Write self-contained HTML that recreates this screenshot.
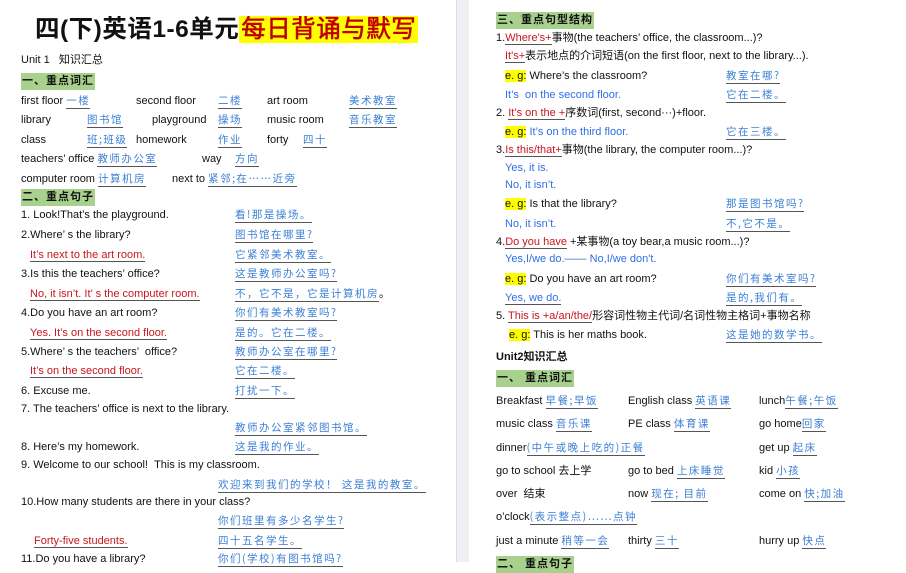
<!DOCTYPE html>
<html><head><meta charset="utf-8"><style>
body{margin:0;width:906px;height:562px;overflow:hidden;background:#fff;position:relative;font-family:"Liberation Sans","Noto Sans CJK SC",sans-serif;color:#111}
.l{position:absolute;font-size:11px;line-height:14px;white-space:nowrap}
.a{color:#3b7fd4;font-family:"Noto Sans CJK SC",sans-serif;letter-spacing:1.5px;border-bottom:1.5px solid #555;font-size:10.5px}
.r{color:#c8161d}
.b{color:#2f6fe6}
.u{border-bottom:1.5px solid #555}
.g{position:absolute;background:#a9d18e;font-weight:bold;font-size:11px;line-height:17px;padding:0 1px;letter-spacing:1px}
.y{background:#ffff00}
.bd{font-weight:bold}
</style></head><body>
<div style="position:absolute;left:457px;top:0;width:12px;height:562px;background:#eef0f4"></div>
<div style="position:absolute;left:456px;top:0;width:1px;height:562px;background:#ddd"></div>

<!-- Left page -->
<div style="position:absolute;left:35px;top:12px;font-size:24.5px;line-height:35px;font-weight:bold;white-space:nowrap;letter-spacing:0.5px">四(下)英语1-6单元<span style="background:#ffff00;color:#c00000;padding:0 2px;font-weight:normal;-webkit-text-stroke:0.6px #c00000">每日背诵与默写</span></div>
<div class="l" style="left:21px;top:53px">Unit 1 &nbsp;&nbsp;知识汇总</div>
<div class="g" style="left:21px;top:73px">一、重点词汇</div>

<div class="l" style="left:21px;top:94px">first floor <span class="a">一楼</span></div>
<div class="l" style="left:136px;top:94px">second floor</div>
<div class="l" style="left:218px;top:94px"><span class="a">二楼</span></div>
<div class="l" style="left:267px;top:94px">art room</div>
<div class="l" style="left:349px;top:94px"><span class="a">美术教室</span></div>

<div class="l" style="left:21px;top:113px">library</div>
<div class="l" style="left:87px;top:113px"><span class="a">图书馆</span></div>
<div class="l" style="left:152px;top:113px">playground</div>
<div class="l" style="left:218px;top:113px"><span class="a">操场</span></div>
<div class="l" style="left:267px;top:113px">music room</div>
<div class="l" style="left:349px;top:113px"><span class="a">音乐教室</span></div>

<div class="l" style="left:21px;top:133px">class</div>
<div class="l" style="left:87px;top:133px"><span class="a">班;班级</span></div>
<div class="l" style="left:136px;top:133px">homework</div>
<div class="l" style="left:218px;top:133px"><span class="a">作业</span></div>
<div class="l" style="left:267px;top:133px">forty</div>
<div class="l" style="left:303px;top:133px"><span class="a">四十</span></div>

<div class="l" style="left:21px;top:152px">teachers’ office <span class="a">教师办公室</span></div>
<div class="l" style="left:202px;top:152px">way</div>
<div class="l" style="left:235px;top:152px"><span class="a">方向</span></div>

<div class="l" style="left:21px;top:172px">computer room <span class="a">计算机房</span></div>
<div class="l" style="left:172px;top:172px">next to <span class="a">紧邻;在……近旁</span></div>

<div class="g" style="left:21px;top:189px">二、重点句子</div>

<div class="l" style="left:21px;top:208px">1. Look!That’s the playground.</div>
<div class="l" style="left:235px;top:208px"><span class="a">看!那是操场。</span></div>
<div class="l" style="left:21px;top:228px">2.Where’ s the library?</div>
<div class="l" style="left:235px;top:228px"><span class="a">图书馆在哪里?</span></div>
<div class="l r" style="left:30px;top:248px"><span class="u">It’s next to the art room.</span></div>
<div class="l" style="left:235px;top:248px"><span class="a">它紧邻美术教室。</span></div>
<div class="l" style="left:21px;top:267px">3.Is this the teachers’ office?</div>
<div class="l" style="left:235px;top:267px"><span class="a">这是教师办公室吗?</span></div>
<div class="l r" style="left:30px;top:287px"><span class="u">No, it isn’t. It’ s the computer room.</span></div>
<div class="l" style="left:235px;top:287px"><span class="a">不，它不是，它是计算机房</span>。</div>
<div class="l" style="left:21px;top:306px">4.Do you have an art room?</div>
<div class="l" style="left:235px;top:306px"><span class="a">你们有美术教室吗?</span></div>
<div class="l r" style="left:30px;top:326px"><span class="u">Yes. It’s on the second floor.</span></div>
<div class="l" style="left:235px;top:326px"><span class="a">是的。它在二楼。</span></div>
<div class="l" style="left:21px;top:345px">5.Where’ s the teachers’ &nbsp;office?</div>
<div class="l" style="left:235px;top:345px"><span class="a">教师办公室在哪里?</span></div>
<div class="l r" style="left:30px;top:364px"><span class="u">It’s on the second floor.</span></div>
<div class="l" style="left:235px;top:364px"><span class="a">它在二楼。</span></div>
<div class="l" style="left:21px;top:384px">6. Excuse me.</div>
<div class="l" style="left:235px;top:384px"><span class="a">打扰一下。</span></div>
<div class="l" style="left:21px;top:402px">7. The teachers’ office is next to the library.</div>
<div class="l" style="left:235px;top:421px"><span class="a">教师办公室紧邻图书馆。</span></div>
<div class="l" style="left:21px;top:440px">8. Here’s my homework.</div>
<div class="l" style="left:235px;top:440px"><span class="a">这是我的作业。</span></div>
<div class="l" style="left:21px;top:458px">9. Welcome to our school! &nbsp;This is my classroom.</div>
<div class="l" style="left:218px;top:478px"><span class="a">欢迎来到我们的学校！ 这是我的教室。</span></div>
<div class="l" style="left:21px;top:495px">10.How many students are there in your class?</div>
<div class="l" style="left:218px;top:514px"><span class="a">你们班里有多少名学生?</span></div>
<div class="l r" style="left:34px;top:534px"><span class="u">Forty-five students.</span></div>
<div class="l" style="left:218px;top:534px"><span class="a">四十五名学生。</span></div>
<div class="l" style="left:21px;top:552px">11.Do you have a library?</div>
<div class="l" style="left:218px;top:552px"><span class="a">你们(学校)有图书馆吗?</span></div>

<!-- Right page -->
<div class="g" style="left:496px;top:12px">三、重点句型结构</div>
<div class="l" style="left:496px;top:31px">1.<span class="r u">Where's+</span>事物(the teachers’ office, the classroom...)?</div>
<div class="l" style="left:505px;top:49px"><span class="r u">It's+</span>表示地点的介词短语(on the first floor, next to the library...).</div>
<div class="l" style="left:505px;top:69px"><span class="y">e. g:</span> Where’s the classroom?</div>
<div class="l" style="left:726px;top:69px"><span class="a">教室在哪?</span></div>
<div class="l b" style="left:505px;top:88px">It’s &nbsp;on the second floor.</div>
<div class="l" style="left:726px;top:88px"><span class="a">它在二楼。</span></div>
<div class="l" style="left:496px;top:106px">2. <span class="r u">It’s on the +</span>序数词(first, second···)+floor.</div>
<div class="l" style="left:505px;top:125px"><span class="y">e. g:</span> <span class="b">It’s on the third floor.</span></div>
<div class="l" style="left:726px;top:125px"><span class="a">它在三楼。</span></div>
<div class="l" style="left:496px;top:143px">3.<span class="r u">Is this/that+</span>事物(the library, the computer room...)?</div>
<div class="l b" style="left:505px;top:161px">Yes, it is.</div>
<div class="l b" style="left:505px;top:178px">No, it isn’t.</div>
<div class="l" style="left:505px;top:197px"><span class="y">e. g:</span> Is that the library?</div>
<div class="l" style="left:726px;top:197px"><span class="a">那是图书馆吗?</span></div>
<div class="l b" style="left:505px;top:217px">No, it isn’t.</div>
<div class="l" style="left:726px;top:217px"><span class="a">不,它不是。</span></div>
<div class="l" style="left:496px;top:235px">4.<span class="r u">Do you have</span> +某事物(a toy bear,a music room...)?</div>
<div class="l b" style="left:505px;top:252px">Yes,I/we do.—— No,I/we don't.</div>
<div class="l" style="left:505px;top:272px"><span class="y">e. g:</span> Do you have an art room?</div>
<div class="l" style="left:726px;top:272px"><span class="a">你们有美术室吗?</span></div>
<div class="l b" style="left:505px;top:291px"><span class="u">Yes, we do.</span></div>
<div class="l" style="left:726px;top:291px"><span class="a">是的,我们有。</span></div>
<div class="l" style="left:496px;top:309px">5. <span class="r u">This is +a/an/the/</span>形容词性物主代词/名词性物主格词+事物名称</div>
<div class="l" style="left:509px;top:328px"><span class="y">e. g:</span> This is her maths book.</div>
<div class="l" style="left:726px;top:328px"><span class="a">这是她的数学书。</span></div>
<div class="l bd" style="left:496px;top:350px">Unit2知识汇总</div>
<div class="g" style="left:496px;top:370px">一、 重点词汇</div>

<div class="l" style="left:496px;top:394px">Breakfast <span class="a">早餐;早饭</span></div>
<div class="l" style="left:628px;top:394px">English class <span class="a">英语课</span></div>
<div class="l" style="left:759px;top:394px">lunch<span class="a">午餐;午饭</span></div>
<div class="l" style="left:496px;top:417px">music class <span class="a">音乐课</span></div>
<div class="l" style="left:628px;top:417px">PE class <span class="a">体育课</span></div>
<div class="l" style="left:759px;top:417px">go home<span class="a">回家</span></div>
<div class="l" style="left:496px;top:441px">dinner<span class="a">(中午或晚上吃的)正餐</span></div>
<div class="l" style="left:759px;top:441px">get up <span class="a">起床</span></div>
<div class="l" style="left:496px;top:464px">go to school 去上学</div>
<div class="l" style="left:628px;top:464px">go to bed <span class="a">上床睡觉</span></div>
<div class="l" style="left:759px;top:464px">kid <span class="a">小孩</span></div>
<div class="l" style="left:496px;top:487px">over &nbsp;结束</div>
<div class="l" style="left:628px;top:487px">now <span class="a">现在; 目前</span></div>
<div class="l" style="left:759px;top:487px">come on <span class="a">快;加油</span></div>
<div class="l" style="left:496px;top:510px">o’clock<span class="a">(表示整点)……点钟</span></div>
<div class="l" style="left:496px;top:534px">just a minute <span class="a">稍等一会</span></div>
<div class="l" style="left:628px;top:534px">thirty <span class="a">三十</span></div>
<div class="l" style="left:759px;top:534px">hurry up <span class="a">快点</span></div>
<div class="g" style="left:496px;top:556px">二、 重点句子</div>
</body></html>
